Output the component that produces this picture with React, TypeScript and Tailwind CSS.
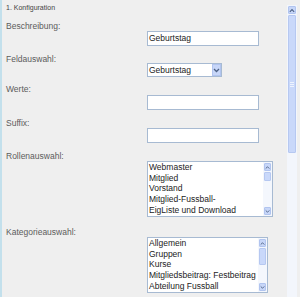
import React from "react";

const ROLES = ["Webmaster", "Mitglied", "Vorstand", "Mitglied-Fussball-", "EigListe und Download"];
const CATEGORIES = ["Allgemein", "Gruppen", "Kurse", "Mitgliedsbeitrag: Festbeitrag", "Abteilung Fussball"];

function Arrow({ up }: { up?: boolean }) {
  return (
    <svg width="7" height="5" viewBox="0 0 7 5" aria-hidden="true">
      {up ? (
        <polyline points="1,4 3.5,1.5 6,4" fill="none" stroke="#4d6185" strokeWidth="1.3" />
      ) : (
        <polyline points="1,1 3.5,3.5 6,1" fill="none" stroke="#4d6185" strokeWidth="1.3" />
      )}
    </svg>
  );
}

function ScrollButton({ up }: { up?: boolean }) {
  return (
    <div className="h-[8px] shrink-0 flex items-center justify-center bg-[#c7d6f8] border border-[#b1c4ef] rounded-[1px]">
      <Arrow up={up} />
    </div>
  );
}

// small XP-style scrollbar used inside listboxes
function ListScrollbar({ thumbTop, thumbHeight }: { thumbTop: number; thumbHeight: number }) {
  return (
    <div className="w-[9px] shrink-0 flex flex-col bg-[#f4f7fd] p-px">
      <ScrollButton up />
      <div className="flex-1">
        <div
          className="bg-[#c9d8fa] border border-[#b6c8f1] rounded-[1px]"
          style={{ marginTop: thumbTop, height: thumbHeight }}
        />
      </div>
      <ScrollButton />
    </div>
  );
}

function ListBox({ items, width, thumbTop, thumbHeight }: { items: string[]; width: number; thumbTop: number; thumbHeight: number }) {
  return (
    <div className="h-[56px] flex bg-white border border-[#a7bad2]" style={{ width }}>
      <ul className="flex-1 pl-px text-[8.5px] leading-[10.7px] text-[#222] whitespace-nowrap overflow-hidden">
        {items.map((it) => (
          <li key={it}>{it}</li>
        ))}
      </ul>
      <ListScrollbar thumbTop={thumbTop} thumbHeight={thumbHeight} />
    </div>
  );
}

function TextInput({ value = "" }: { value?: string }) {
  return (
    <div className="w-[112px] h-[15px] bg-white border border-[#a7bad2] pl-px text-[8.5px] leading-[13px] text-[#222]">
      {value}
    </div>
  );
}

function Label({ children, className = "" }: { children: React.ReactNode; className?: string }) {
  return <div className={`pl-[4px] text-[8.5px] leading-[10px] text-[#5c5c5c] ${className}`}>{children}</div>;
}

export default function App() {
  return (
    <div
      className="w-[300px] h-[297px] overflow-hidden bg-[#efefef] border-l-2 border-[#c3e0ec] flex"
      style={{ fontFamily: '"Liberation Sans", Arial, sans-serif' }}
    >
      {/* ── Form ─────────────────────────────────────────── */}
      <div className="flex-1 flex flex-col">
        <div className="pl-[4px] pt-[4px] text-[7px] leading-[8px] text-[#444]">1. Konfiguration</div>

        <Label className="mt-[9px]">Beschreibung:</Label>
        <div className="pl-[145px]">
          <TextInput value="Geburtstag" />
        </div>

        <Label className="mt-[8px]">Feldauswahl:</Label>
        <div className="pl-[145px] -mt-px">
          <div className="w-[75px] h-[14px] flex bg-white border border-[#a7bad2] text-[8.5px] leading-[12px] text-[#222]">
            <span className="flex-1 pl-px">Geburtstag</span>
            <div className="w-[9px] flex items-center justify-center bg-[#c7d6f8] border border-[#b1c4ef]">
              <Arrow />
            </div>
          </div>
        </div>

        <Label className="mt-[7px]">Werte:</Label>
        <div className="pl-[145px] mt-px">
          <TextInput />
        </div>

        <Label className="mt-[8px]">Suffix:</Label>
        <div className="pl-[145px]">
          <TextInput />
        </div>

        <Label className="mt-[8px]">Rollenauswahl:</Label>
        <div className="pl-[145px]">
          <ListBox items={ROLES} width={126} thumbTop={1} thumbHeight={9} />
        </div>

        <Label className="mt-[10px]">Kategorieauswahl:</Label>
        <div className="pl-[145px]">
          <ListBox items={CATEGORIES} width={121} thumbTop={1} thumbHeight={17} />
        </div>
      </div>

      {/* ── Page scrollbar ───────────────────────────────── */}
      <div className="w-[10px] mr-[3px] mt-[5px] flex flex-col bg-[#f3f6fc] p-px">
        <div className="h-[8px] flex items-center justify-center bg-[#c7d6f8] border border-[#b1c4ef] rounded-[1px]">
          <Arrow up />
        </div>
        <div className="h-[138px] mt-px flex items-center justify-center bg-[#c9d8fa] border border-[#b6c8f1] rounded-[1px]">
          <div className="w-[4px] h-[5px] border-y border-[#eef3fe] flex items-center">
            <div className="w-full h-px bg-[#eef3fe]" />
          </div>
        </div>
      </div>
    </div>
  );
}
